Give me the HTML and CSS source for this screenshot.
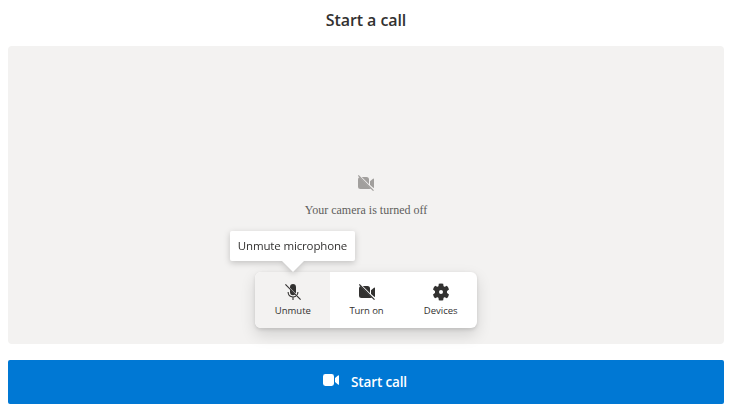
FILE: index.html
```
<!DOCTYPE html>
<html lang="en">
<head>
<meta charset="utf-8">
<title>Start a call</title>
<link rel="stylesheet" href="styles.css">
</head>
<body>
<svg width="0" height="0" class="defs">
  <symbol id="video-off" viewBox="0 0 16 16">
    <path d="M1.4 2 13 13.6Q12.5 14 11.5 14H2.5Q0 14 0 11.5V4.5Q0 2.6 1.4 2ZM3.4 2H8.5Q11 2 11 4.5V9.6ZM12 6.2 15 3.7Q16 3.1 16 4.2V12.2Q16 13 15.4 13L12 10Z"/>
    <path d="M.9 0 16 15.1" class="slash-gap"/>
    <path d="M.3.5 15.5 15.7" class="slash"/>
  </symbol>
</svg>
<main class="page">
  <h1 class="title">Start a call</h1>
  <section class="preview">
    <svg class="camera-icon" width="16" height="16"><use href="#video-off"/></svg>
    <p class="camera-text">Your camera is turned off</p>
    <div class="controls">
      <button class="control active">
        <svg width="16" height="16" viewBox="0 0 16 16">
          <path d="M5 3Q5.1 0 8 0T11 3V8.5L10.5 9.3 5 3.8ZM5 5.4 10.1 10.5Q8.9 11.3 8 11.3 5.2 11.2 5 8.3Z"/>
          <path d="M3.1 8Q3.2 12.8 8 13 9.6 13 11 12M12.9 8Q12.9 9.8 12 10.9M8 13V16" class="stand"/>
          <path d="M.4.4 15.6 15.6" class="slash"/>
        </svg>
        <span class="label">Unmute</span>
        <span class="tooltip">Unmute microphone</span>
      </button>
      <button class="control toggle">
        <svg width="16" height="16"><use href="#video-off"/></svg>
        <span class="label turn">Turn on</span>
      </button>
      <button class="control devices">
        <svg class="gear" width="18" height="18" viewBox="0 0 18 18">
          <path fill-rule="evenodd" d="M6.8.7Q9 .1 11.2.7L11.5 3.1Q12 3.9 12.8 3.7L14.9 2.8Q16.5 4.4 17 6.6L15.1 8Q14.7 9 15.1 10L17 11.4Q16.5 13.6 14.9 15.2L12.8 14.3Q12 14.1 11.5 14.9L11.2 17.3Q9 17.9 6.8 17.3L6.5 14.9Q6 14.1 5.2 14.3L3.1 15.2Q1.5 13.6 1 11.4L2.9 10Q3.3 9 2.9 8L1 6.6Q1.5 4.4 3.1 2.8L5.2 3.7Q6 3.9 6.5 3.1ZM9 7A2 2 0 1 0 9 11 2 2 0 1 0 9 7Z"/>
        </svg>
        <span class="label">Devices</span>
      </button>
    </div>
  </section>
  <button class="start">
    <svg width="16" height="12" viewBox="0 0 16 12"><path d="M2.4 0H8.6Q11 0 11 2.4V9.6Q11 12 8.6 12H2.4Q0 12 0 9.6V2.4Q0 0 2.4 0ZM12 3.9 15 1.4Q16 .8 16 1.8V10.2Q16 11.2 15 10.6L12 8.1Z"/></svg>
    <span class="start-text">Start call</span>
  </button>
</main>
</body>
</html>
```
FILE: styles.css
```
* { box-sizing: border-box; }
body {
  margin: 0;
  background: #fff;
  color: #323130;
  font-family: "Open Sans", "Noto Sans", sans-serif;
}
svg { display: block; fill: currentColor; flex: none; }
.defs { position: absolute; }
button { border: 0; padding: 0; font: inherit; color: inherit; }
.page { height: 412px; padding: 0 8px 8px; display: flex; flex-direction: column; }
.title {
  margin: 0;
  height: 46px;
  padding-top: 8px;
  font-size: 16px;
  line-height: 24px;
  font-weight: 600;
  letter-spacing: -.08px;
  text-align: center;
}
.preview {
  height: 298px;
  margin-bottom: 16px;
  padding: 129px 0 16px;
  border-radius: 4px;
  background: #f3f2f1;
  display: flex;
  flex-direction: column;
  align-items: center;
  --surface: #f3f2f1;
}
.slash { fill: none; stroke: currentColor; stroke-width: 1.1; }
.slash-gap { fill: none; stroke: var(--surface); stroke-width: 1.1; }
.stand { fill: none; stroke: currentColor; stroke-width: 1.1; }
.camera-icon { color: #a19f9d; }
.camera-text {
  margin: 12px 0 0;
  color: #605e5c;
  font: 12px/14px "Liberation Serif", serif;
}
.controls {
  width: 222px;
  height: 56px;
  margin-top: auto;
  display: flex;
  border-radius: 6px;
  background: #fff;
  box-shadow: 0 6.4px 14.4px rgba(0,0,0,.132), 0 1.2px 3.6px rgba(0,0,0,.108);
}
.control {
  position: relative;
  width: 74px;
  padding: 12px 0 0;
  background: transparent;
  display: flex;
  flex-direction: column;
  align-items: center;
}
.control.active { width: 75px; padding-left: 1px; background: #f3f2f1; border-radius: 6px 0 0 6px; }
.toggle { --surface: #fff; }
.devices { padding-left: 1px; }
.gear { margin: -1px 0; }
.label { margin-top: 4px; font-size: 9.5px; line-height: 14px; white-space: nowrap; }
.turn { letter-spacing: -.1px; }
.tooltip {
  position: absolute;
  left: -25px;
  top: -41px;
  width: 125px;
  height: 30px;
  border-radius: 2px;
  background: #fff;
  font-size: 11.5px;
  line-height: 30px;
  letter-spacing: -.15px;
  white-space: nowrap;
  filter: drop-shadow(0 2px 3px rgba(0,0,0,.2));
}
.tooltip::after {
  content: "";
  position: absolute;
  left: 51px;
  top: 29px;
  border: solid transparent;
  border-width: 12px 12px 0;
  border-top-color: #fff;
}
.start {
  height: 44px;
  border-radius: 2px;
  background: #0078d4;
  color: #fff;
  display: flex;
  align-items: center;
  justify-content: center;
  gap: 12px;
  padding-right: 2px;
}
.start svg { margin-bottom: 5px; }
.start-text { font-size: 13.5px; line-height: 20px; padding-bottom: 1px; font-weight: 600; letter-spacing: -.15px; }
```
